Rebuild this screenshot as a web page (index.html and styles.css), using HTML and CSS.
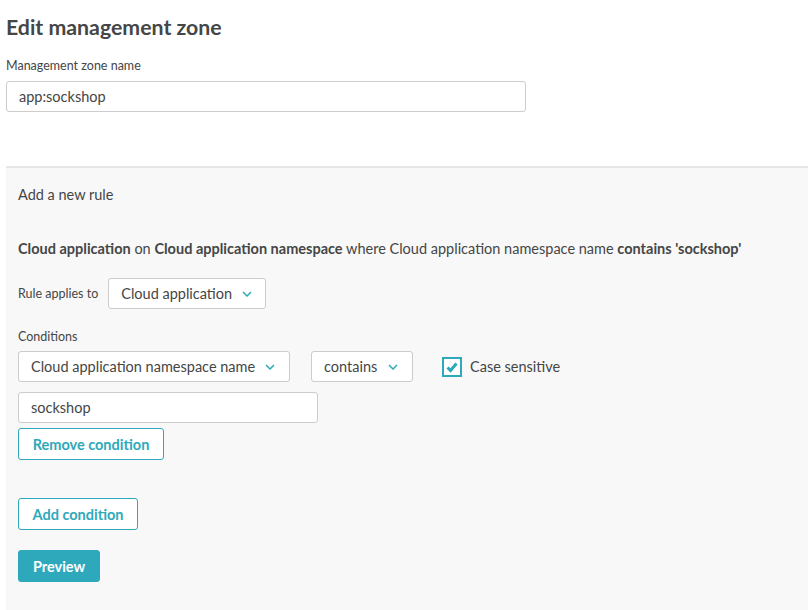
FILE: index.html
```html
<!DOCTYPE html>
<html>
<head>
<meta charset="utf-8">
<link rel="stylesheet" href="styles.css">
</head>
<body>
<div class="page">
  <h1 class="title">Edit management zone</h1>
  <div class="field-label">Management zone name</div>
  <div class="input input-name">app:sockshop</div>

  <div class="panel">
    <div class="panel-title">Add a new rule</div>
    <div class="summary"><b>Cloud application</b> on <b>Cloud application namespace</b> where Cloud application namespace name <b>contains 'sockshop'</b></div>

    <div class="applies-row">
      <span class="small-label">Rule applies to</span>
      <div class="select select-applies">
        <span class="select-text">Cloud application</span>
        <svg class="chev" width="10" height="6" viewBox="0 0 10 6"><path d="M1 1 L5 5 L9 1" fill="none" stroke="#2ea9bb" stroke-width="1.5"/></svg>
      </div>
    </div>

    <div class="small-label cond-label">Conditions</div>
    <div class="cond-row">
      <div class="select select-attr">
        <span class="select-text">Cloud application namespace name</span>
        <svg class="chev" width="10" height="6" viewBox="0 0 10 6"><path d="M1 1 L5 5 L9 1" fill="none" stroke="#2ea9bb" stroke-width="1.5"/></svg>
      </div>
      <div class="select select-op">
        <span class="select-text">contains</span>
        <svg class="chev" width="10" height="6" viewBox="0 0 10 6"><path d="M1 1 L5 5 L9 1" fill="none" stroke="#2ea9bb" stroke-width="1.5"/></svg>
      </div>
      <label class="check">
        <span class="box">
          <svg width="14" height="12" viewBox="0 0 14 12"><path d="M2.5 6.5 L5.5 9.5 L11.5 2.5" fill="none" stroke="#2ea9bb" stroke-width="3"/></svg>
        </span>
        <span class="check-text">Case sensitive</span>
      </label>
    </div>
    <div class="input input-value">sockshop</div>
    <button class="btn btn-outline btn-remove">Remove condition</button>
    <button class="btn btn-outline btn-add">Add condition</button>
    <button class="btn btn-primary btn-preview">Preview</button>
  </div>
</div>
</body>
</html>
```

FILE: styles.css
```css
html, body {
  margin: 0;
  padding: 0;
  background: #ffffff;
}

body {
  font-family: Lato, "Open Sans", sans-serif;
  color: #454646;
  overflow: hidden;
}

.page {
  padding-left: 6px;
}

.title {
  margin: 0;
  padding-top: 13px;
  font-size: 21.3px;
  line-height: 28px;
  font-weight: 700;
  color: #454646;
}

.field-label {
  margin-top: 17px;
  font-size: 12.5px;
  line-height: 16px;
}

.input {
  box-sizing: border-box;
  height: 31px;
  background: #fff;
  border: 1px solid #cccccc;
  border-radius: 3px;
  font-size: 14.5px;
  line-height: 29px;
  padding: 0 12px;
  color: #454646;
}

.input-name {
  margin-top: 7px;
  width: 520px;
}

.panel {
  margin-top: 54px;
  border-top: 2px solid #e6e6e6;
  background: #f8f8f8;
  padding: 17px 12px 40px 12px;
  display: flex;
  flex-direction: column;
  align-items: flex-start;
}

.panel-title {
  font-size: 14.5px;
  line-height: 20px;
}

.summary {
  margin-top: 34px;
  font-size: 14.5px;
  line-height: 20px;
  white-space: nowrap;
}

.summary b {
  font-weight: 700;
}

.applies-row {
  margin-top: 19px;
  display: flex;
  align-items: center;
  gap: 10px;
}

.small-label {
  font-size: 12.5px;
  line-height: 16px;
}

.select {
  box-sizing: border-box;
  height: 31px;
  background: #fff;
  border: 1px solid #cccccc;
  border-radius: 3px;
  font-size: 14.5px;
  display: flex;
  align-items: center;
  justify-content: space-between;
  padding: 0 14px 0 12px;
  flex-shrink: 0;
}

.select-text {
  white-space: nowrap;
}

.chev {
  display: block;
  flex-shrink: 0;
  margin-left: 10px;
}

.select-applies {
  width: 158px;
}

.cond-label {
  margin-top: 20px;
}

.cond-row {
  margin-top: 6px;
  display: flex;
  align-items: center;
}

.select-attr {
  width: 272px;
}

.select-op {
  width: 102px;
  margin-left: 21px;
}

.check {
  display: flex;
  align-items: center;
  margin-left: 29px;
}

.box {
  box-sizing: border-box;
  width: 20px;
  height: 20px;
  border: 2px solid #2ea9bb;
  display: flex;
  align-items: center;
  justify-content: center;
  background: #fff;
}

.check-text {
  margin-left: 8px;
  font-size: 14.5px;
}

.input-value {
  margin-top: 10px;
  width: 300px;
}

.btn {
  box-sizing: border-box;
  height: 32px;
  border-radius: 3px;
  font-family: Lato, "Open Sans", sans-serif;
  font-size: 14.5px;
  font-weight: 700;
  padding: 0;
  cursor: pointer;
}

.btn-outline {
  background: #fff;
  border: 1px solid #2ea9bb;
  color: #2ea9bb;
}

.btn-primary {
  background: #2ea9bb;
  border: 1px solid #2ea9bb;
  color: #fff;
}

.btn-remove {
  margin-top: 5px;
  width: 146px;
}

.btn-add {
  margin-top: 38px;
  width: 120px;
}

.btn-preview {
  margin-top: 20px;
  width: 82px;
}
```
